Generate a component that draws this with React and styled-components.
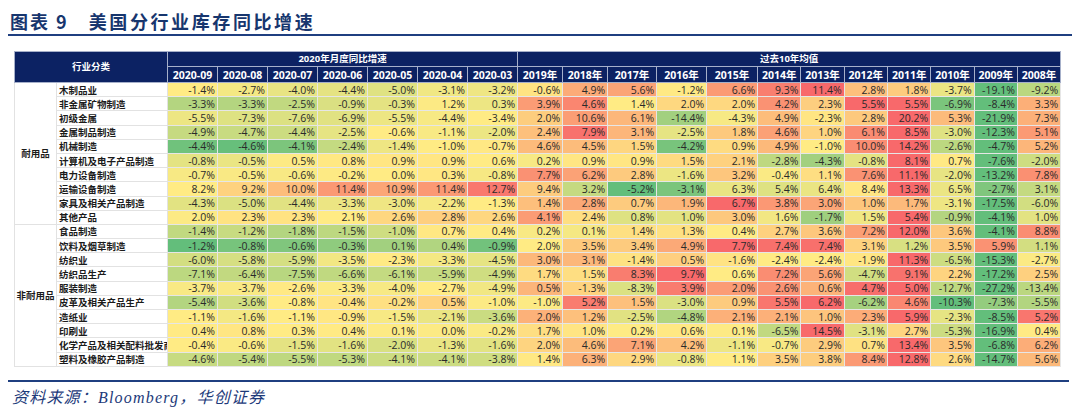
import React from "react";
import styled, { createGlobalStyle } from "styled-components";

const GlobalStyle = createGlobalStyle`
  body {
    margin: 0;
    background: #ffffff;
  }
`;

// styled
const Page = styled.div`
  width: 1080px;
  height: 416px;
  box-sizing: border-box;
  padding: 8px 8px 0 8px;
  background: #ffffff;
  overflow: hidden;
`;

const Title = styled.h1`
  margin: 0;
  height: 26px;
  display: flex;
  align-items: center;
  padding-left: 2px;
  border-bottom: 2px solid #1f3f80;
  font-family: "Noto Sans CJK SC", sans-serif;
  font-size: 18px;
  font-weight: 700;
  letter-spacing: 2.6px;
  color: #17366e;
`;

const TitleNo = styled.span`
  margin-right: 20px;
  letter-spacing: 2px;
`;

const TableWrap = styled.div`
  margin: 15px 0 0 6px;
`;

const Table = styled.table`
  width: 1046px;
  border-collapse: collapse;
  table-layout: fixed;
  font-family: "Open Sans", "Noto Sans CJK SC", sans-serif;
`;

const Head = styled.th`
  height: ${(p) => p.$h || 14}px;
  padding: 0;
  background: #0c2263;
  color: #ffffff;
  border: 1px solid #a6b0ca;
  font-family: "Open Sans", "Noto Sans CJK SC", sans-serif;
  font-size: ${(p) => (p.$cjk ? 9.5 : 10.5)}px;
  font-weight: 700;
  line-height: 12px;
  text-align: center;
  white-space: nowrap;
  overflow: hidden;
`;

const Row = styled.tr`
  height: 14.2px;
`;

const Group = styled.td`
  padding: 0;
  background: #ffffff;
  border: 1px solid #e2e2e2;
  font-family: "Noto Sans CJK SC", sans-serif;
  font-size: 9.5px;
  font-weight: 700;
  color: #1b1b1b;
  text-align: center;
  vertical-align: middle;
`;

const Label = styled.td`
  padding: 0 0 0 2px;
  background: #ffffff;
  border: 1px solid #e2e2e2;
  font-family: "Noto Sans CJK SC", sans-serif;
  font-size: 9.5px;
  font-weight: 700;
  line-height: 12px;
  color: #1b1b1b;
  white-space: nowrap;
  overflow: hidden;
`;

const Cell = styled.td`
  padding: 0 2px 0 0;
  border: 1px solid #e6e6e6;
  font-size: 10.5px;
  line-height: 12px;
  color: #2a2a2a;
  text-align: right;
  white-space: nowrap;
`;

const Footer = styled.div`
  margin-top: 13px;
  width: 1057px;
  border-top: 2px solid #1f3f80;
  padding: 6px 0 0 4px;
  font-family: "Liberation Serif", "Noto Sans CJK SC", serif;
  font-style: italic;
  font-size: 16px;
  line-height: 20px;
  letter-spacing: 1.2px;
  color: #1d3a7a;
`;

// data
const months = ["2020-09", "2020-08", "2020-07", "2020-06", "2020-05", "2020-04", "2020-03"];
const years = ["2019年", "2018年", "2017年", "2016年", "2015年", "2014年", "2013年", "2012年", "2011年", "2010年", "2009年", "2008年"];
const colWidths = [42, 111, 50, 50, 50, 50, 50, 50, 50, 45, 45, 49, 50, 51, 43.3, 43.3, 43.3, 43.3, 43.3, 43.3, 43.2];

const groups = [
  {
    name: "耐用品",
    rows: [
      ["木制品业", -1.4, -2.7, -4.0, -4.4, -5.0, -3.1, -3.2, -0.6, 4.9, 5.6, -1.2, 6.6, 9.3, 11.4, 2.8, 1.8, -3.7, -19.1, -9.2],
      ["非金属矿物制造", -3.3, -3.3, -2.5, -0.9, -0.3, 1.2, 0.3, 3.9, 4.6, 1.4, 2.0, 2.0, 4.2, 2.3, 5.5, 5.5, -6.9, -8.4, 3.3],
      ["初级金属", -5.5, -7.3, -7.6, -6.9, -5.5, -4.4, -3.4, 2.0, 10.6, 6.1, -14.4, -4.3, 4.9, -2.3, 2.8, 20.2, 5.3, -21.9, 7.3],
      ["金属制品制造", -4.9, -4.7, -4.4, -2.5, -0.6, -1.1, -2.0, 2.4, 7.9, 3.1, -2.5, 1.8, 4.6, 1.0, 6.1, 8.5, -3.0, -12.3, 5.1],
      ["机械制造", -4.4, -4.6, -4.1, -2.4, -1.4, -1.0, -0.7, 4.6, 4.5, 1.5, -4.2, 0.9, 4.9, -1.0, 10.0, 14.2, -2.6, -4.7, 5.2],
      ["计算机及电子产品制造", -0.8, -0.5, 0.5, 0.8, 0.9, 0.9, 0.6, 0.2, 0.9, 0.9, 1.5, 2.1, -2.8, -4.3, -0.8, 8.1, 0.7, -7.6, -2.0],
      ["电力设备制造", -0.7, -0.5, -0.6, -0.2, 0.0, 0.3, -0.8, 7.7, 6.2, 2.8, -1.6, 3.2, -0.4, 1.1, 7.6, 11.1, -2.0, -13.2, 7.8],
      ["运输设备制造", 8.2, 9.2, 10.0, 11.4, 10.9, 11.4, 12.7, 9.4, 3.2, -5.2, -3.1, 6.3, 5.4, 6.4, 8.4, 13.3, 6.5, -2.7, 3.1],
      ["家具及相关产品制造", -4.3, -5.0, -4.4, -3.3, -3.0, -2.2, -1.3, 1.4, 2.8, 0.7, 1.9, 6.7, 3.8, 3.0, 1.0, 1.7, -3.1, -17.5, -6.0],
      ["其他产品", 2.0, 2.3, 2.3, 2.1, 2.6, 2.8, 2.6, 4.1, 2.4, 0.8, 1.0, 3.0, 1.6, -1.7, 1.5, 5.4, -0.9, -4.1, 1.0],
    ],
  },
  {
    name: "非耐用品",
    rows: [
      ["食品制造", -1.4, -1.2, -1.8, -1.5, -1.0, 0.7, 0.4, 0.2, 0.1, 1.4, 1.3, 0.4, 2.7, 3.6, 7.2, 12.0, 3.6, -4.1, 8.8],
      ["饮料及烟草制造", -1.2, -0.8, -0.6, -0.3, 0.1, 0.4, -0.9, 2.0, 3.5, 3.4, 4.9, 7.7, 7.4, 7.4, 3.1, 1.2, 3.5, 5.9, 1.1],
      ["纺织业", -6.0, -5.8, -5.9, -3.5, -2.3, -3.3, -4.5, 3.0, 3.1, -1.4, 0.5, -1.6, -2.4, -2.4, -1.9, 11.3, -6.5, -15.3, -2.7],
      ["纺织品生产", -7.1, -6.4, -7.5, -6.6, -6.1, -5.9, -4.9, 1.7, 1.5, 8.3, 9.7, 0.6, 7.2, 5.6, -4.7, 9.1, 2.2, -17.2, 2.5],
      ["服装制造", -3.7, -3.7, -2.6, -3.3, -4.0, -2.7, -4.9, 0.5, -1.3, -8.3, 3.9, 2.0, 2.6, 0.6, 4.7, 5.0, -12.7, -27.2, -13.4],
      ["皮革及相关产品生产", -5.4, -3.6, -0.8, -0.4, -0.2, 0.5, -1.0, -1.0, 5.2, 1.5, -3.0, 0.9, 5.5, 6.2, -6.2, 4.6, -10.3, -7.3, -5.5],
      ["造纸业", -1.1, -1.6, -1.1, -0.9, -1.5, -2.1, -3.6, 2.0, 1.2, -2.5, -4.8, 2.1, 2.1, 1.0, 2.3, 5.9, -2.3, -8.5, 5.2],
      ["印刷业", 0.4, 0.8, 0.3, 0.4, 0.1, 0.0, -0.2, 1.7, 1.0, 0.2, 0.6, 0.1, -6.5, 14.5, -3.1, 2.7, -5.3, -16.9, 0.4],
      ["化学产品及相关配料批发商", -0.4, -0.6, -1.5, -1.6, -2.0, -1.3, -1.6, 2.0, 4.6, 7.1, 4.2, -1.1, -0.7, 2.9, 0.7, 13.4, 3.5, -6.8, 6.2],
      ["塑料及橡胶产品制造", -4.6, -5.4, -5.5, -5.3, -4.1, -4.1, -3.8, 1.4, 6.3, 2.9, -0.8, 1.1, 3.5, 3.8, 8.4, 12.8, 2.6, -14.7, 5.6],
    ],
  },
];

// colour scale: green at min, yellow at the row median, red at max
const GREEN = [99, 190, 123];
const YELLOW = [255, 235, 132];
const RED = [248, 105, 107];

function rowScale(values) {
  const s = [...values].sort((a, b) => a - b);
  const pos = (s.length - 1) * 0.5;
  const lo = Math.floor(pos);
  const mid = s[lo] + (s[Math.ceil(pos)] - s[lo]) * (pos - lo);
  return { min: s[0], mid, max: s[s.length - 1] };
}

function heat(v, { min, mid, max }) {
  let a, b, t;
  if (v <= mid) {
    a = GREEN;
    b = YELLOW;
    t = mid === min ? 1 : (v - min) / (mid - min);
  } else {
    a = YELLOW;
    b = RED;
    t = max === mid ? 0 : (v - mid) / (max - mid);
  }
  const c = a.map((x, i) => Math.round(x + (b[i] - x) * t));
  return `rgb(${c[0]}, ${c[1]}, ${c[2]})`;
}

const DataRow = ({ row, group }) => {
  const [label, ...values] = row;
  const scale = rowScale(values);
  return (
    <Row>
      {group}
      <Label>{label}</Label>
      {values.map((v, i) => (
        <Cell key={i} style={{ background: heat(v, scale) }}>
          {v.toFixed(1)}%
        </Cell>
      ))}
    </Row>
  );
};

const App = () => {
  return (
    <>
      <GlobalStyle />
      <Page>
        <Title>
          <TitleNo>图表 9</TitleNo>
          美国分行业库存同比增速
        </Title>
        <TableWrap>
          <Table>
            <colgroup>
              {colWidths.map((w, i) => (
                <col key={i} style={{ width: w }} />
              ))}
            </colgroup>
            <thead>
              <tr>
                <Head colSpan={2} rowSpan={2} $cjk>行业分类</Head>
                <Head colSpan={7} $cjk>2020年月度同比增速</Head>
                <Head colSpan={12} $cjk>过去10年均值</Head>
              </tr>
              <tr>
                {months.map((m) => (
                  <Head key={m} $h={15}>{m}</Head>
                ))}
                {years.map((y) => (
                  <Head key={y} $h={15}>{y}</Head>
                ))}
              </tr>
            </thead>
            <tbody>
              {groups.map((g) =>
                g.rows.map((row, i) => (
                  <DataRow
                    key={row[0]}
                    row={row}
                    group={i === 0 ? <Group rowSpan={g.rows.length}>{g.name}</Group> : null}
                  />
                ))
              )}
            </tbody>
          </Table>
        </TableWrap>
        <Footer>资料来源：Bloomberg，华创证券</Footer>
      </Page>
    </>
  );
};

export default App;
